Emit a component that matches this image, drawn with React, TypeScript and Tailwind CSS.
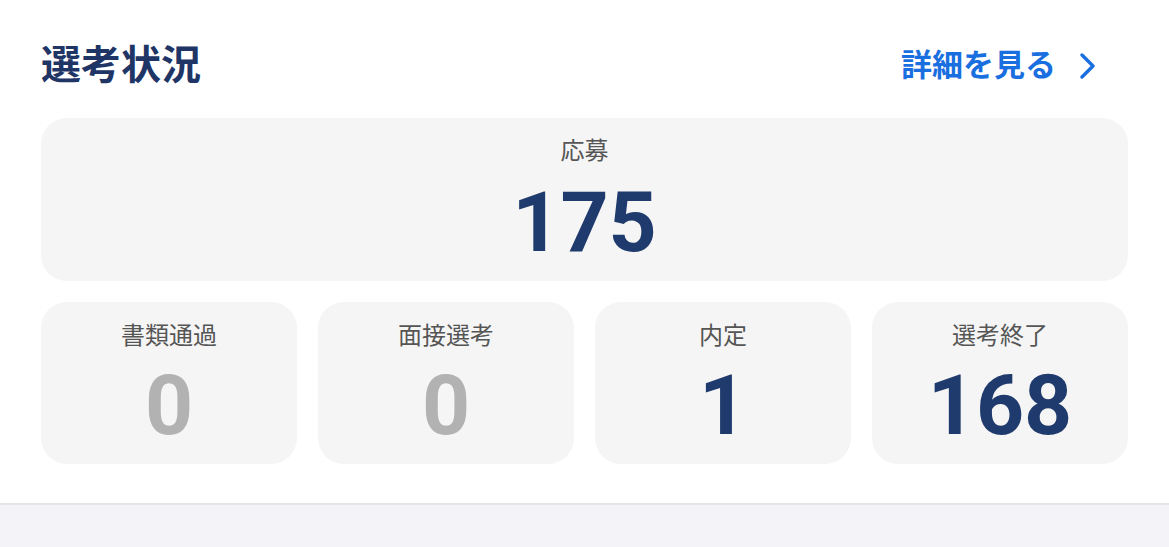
const font = "font-['Roboto','Noto_Sans_CJK_JP',sans-serif]";

const stages = [
  { label: "書類通過", value: 0 },
  { label: "面接選考", value: 0 },
  { label: "内定", value: 1 },
  { label: "選考終了", value: 168 },
];

const StatCard = ({ label, value, big }: { label: string; value: number; big?: boolean }) => (
  <div className={`flex flex-col items-center rounded-[26px] bg-[#f5f5f5] ${big ? "h-[163px] pt-[18px]" : "h-[162px] pt-[19px]"}`}>
    <span className="text-[24px] leading-[30px] text-[#555]">{label}</span>
    <span
      className={`text-[84px] font-bold leading-[84px] ${big ? "mt-[15px]" : "mt-[13px]"} ${value === 0 ? "text-[#b2b2b2]" : "text-[#1f3a6c]"}`}
    >
      {value}
    </span>
  </div>
);

export default function App() {
  return (
    <div className={`min-h-[547px] bg-[#f4f4f8] ${font}`}>
      <section className="border-b-2 border-[#e3e3e8] bg-white px-[41px] pb-[39px] pt-[42px]">
        <div className="flex h-[48px] items-center justify-between">
          <h2 className="text-[40px] font-bold leading-[48px] text-[#1e3566]">選考状況</h2>
          <a className="mr-[30px] flex items-center gap-[22px] text-[31px] font-bold text-[#1a6fe0]">
            詳細を見る
            <svg width="20" height="26" viewBox="0 0 20 26" fill="none">
              <path d="M4 2l11 11L4 24" stroke="#1a6fe0" strokeWidth="3.4" strokeLinecap="round" strokeLinejoin="round" />
            </svg>
          </a>
        </div>
        <div className="mt-[28px]">
          <StatCard label="応募" value={175} big />
        </div>
        <div className="mt-[21px] grid grid-cols-4 gap-[21px]">
          {stages.map((s) => (
            <StatCard key={s.label} label={s.label} value={s.value} />
          ))}
        </div>
      </section>
    </div>
  );
}
